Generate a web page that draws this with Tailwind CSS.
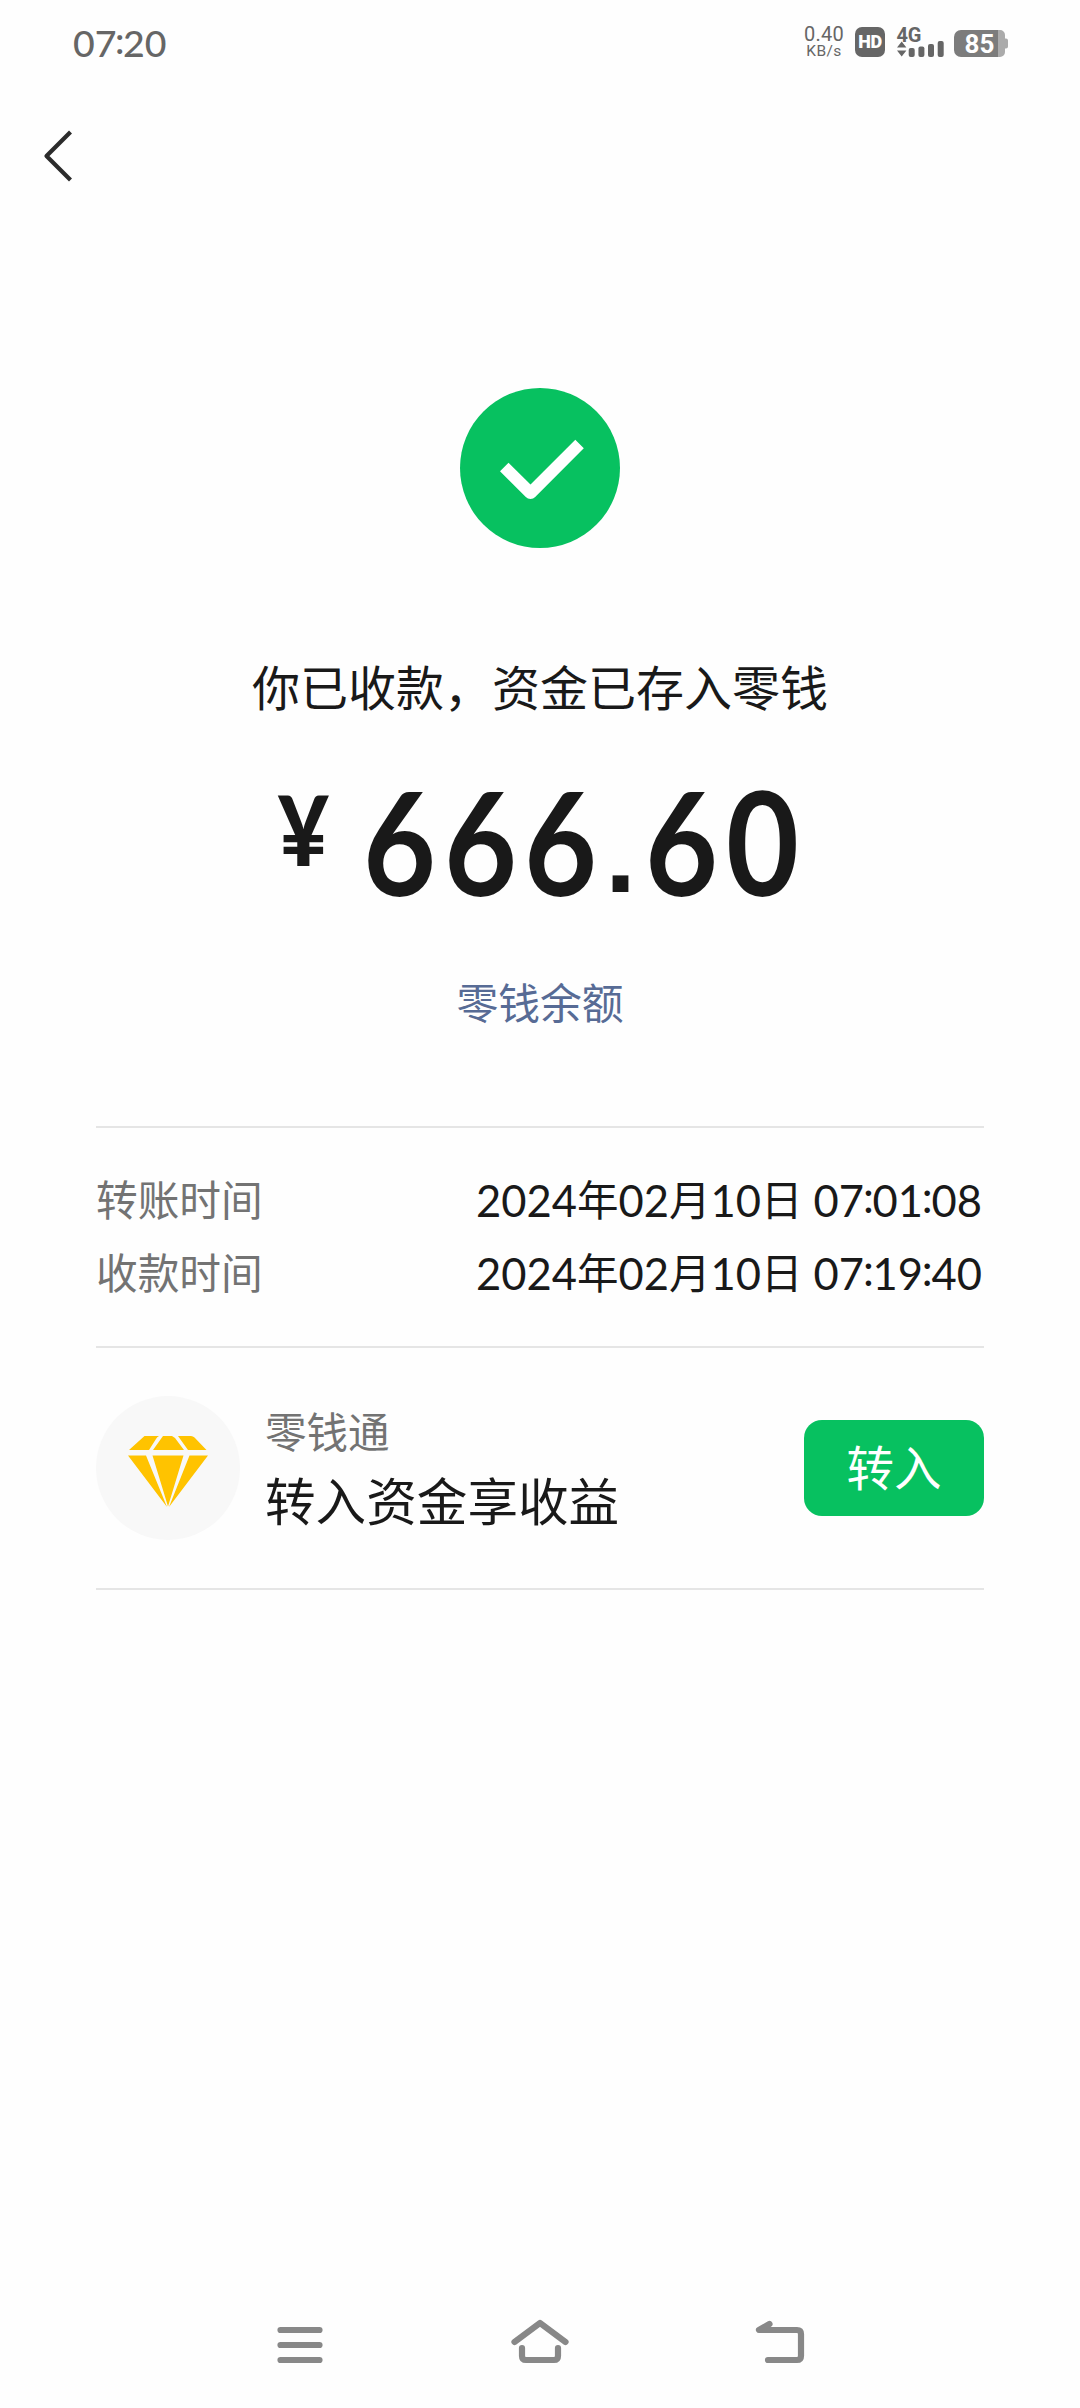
<!DOCTYPE html>
<html lang="zh-CN">
<head>
<meta charset="utf-8">
<title>收款详情</title>
<script src="https://cdn.jsdelivr.net/npm/@tailwindcss/browser@4"></script>
</head>
<body class="bg-[#fefefe]">
<div class="flex h-[2408px] w-[1080px] flex-col overflow-hidden bg-[#fefefe] font-['Lato','Noto_Sans_CJK_SC',sans-serif] text-[#191919]">

  <!-- status bar -->
  <header class="flex h-[88px] shrink-0 items-center justify-between pl-[73px] pr-[72px] text-[#666]">
    <div class="flex text-[37.5px] leading-[85px] -mt-[3px] font-medium"><span>07</span><span class="-mx-[1.5px] -mt-[3px]">:</span><span>20</span></div>
    <div class="flex h-[88px] items-start pt-[26px]">
      <div class="flex w-[40px] flex-col items-center font-['Roboto',sans-serif]">
        <span class="text-[20px] leading-[17px] tracking-[0.2px]">0.40</span>
        <span class="text-[15.5px] leading-[17px] tracking-[0.4px]">KB/s</span>
      </div>
      <div class="ml-[11px] mt-px flex h-[30px] w-[30px] items-center justify-center rounded-[7px] bg-[#666] font-['Roboto',sans-serif] text-[18px] font-black leading-none tracking-[-0.5px] text-white">HD</div>
      <svg class="ml-[11px] overflow-visible" width="49" height="32" viewBox="896 26 49 32" fill="#666">
        <text x="896.500" y="41.500" font-family="Roboto" font-weight="700" font-size="20" textLength="25">4G</text>
        <path d="M897 47.500l4.700-6 4.700 6zM897 50.500l4.700 6 4.700-6z"/>
        <rect x="908.700" y="48" width="6" height="9" rx="2"/>
        <rect x="918.400" y="46.500" width="6" height="10.500" rx="2"/>
        <rect x="928" y="44" width="6" height="13" rx="2"/>
        <rect x="937.700" y="41" width="6" height="16" rx="2"/>
      </svg>
      <svg class="ml-[9px]" width="54" height="32" viewBox="954 26 54 32">
        <path d="M997 30h3a5 5 0 0 1 5 5v3.500h1a2 2 0 0 1 2 2v6a2 2 0 0 1-2 2h-1V52a5 5 0 0 1-5 5h-3z" fill="#ababab"/>
        <path d="M961 30h37v27h-37a7 7 0 0 1-7-7V37a7 7 0 0 1 7-7z" fill="#7c7c7c"/>
        <text x="964.500" y="52.700" font-family="Roboto" font-weight="700" font-size="26" textLength="30" fill="#fff">85</text>
      </svg>
    </div>
  </header>

  <!-- navigation -->
  <nav class="flex h-[136px] shrink-0 pl-[40px] pt-[40px]">
    <svg width="36" height="56" viewBox="40 128 36 56" fill="none" stroke="#2b2b2b" stroke-width="4.200" stroke-linejoin="round"><path d="M70.500 132L46.500 156l24 24"/></svg>
  </nav>

  <!-- result -->
  <main class="flex flex-1 flex-col px-[96px] pt-[164px]">
    <section class="flex flex-col items-center">
      <svg width="160" height="160" viewBox="460 388 160 160">
        <circle cx="540" cy="468" r="80" fill="#07c160"/>
        <path d="M500 471.300l8.500-8.500 22 21.700 44.800-44.700 8.500 8.500-48.600 48.700a6.500 6.500 0 0 1-9.400 0z" fill="#fff"/>
      </svg>
      <h1 class="mt-[104px] whitespace-nowrap text-[48px] font-normal leading-[72px]">你已收款，资金已存入零钱</h1>
      <div class="mt-[49px] flex h-[140px] items-start pr-[1px] text-[143px] font-bold leading-[136px]">
        <span class="mr-[28px] mt-[15px] flex w-[54px] justify-center text-[98px] font-black leading-[80px]"><span class="scale-x-[.9]">¥</span></span>
        <span class="flex w-[81px] justify-center"><span class="scale-x-[.88]">6</span></span>
        <span class="flex w-[81px] justify-center"><span class="scale-x-[.88]">6</span></span>
        <span class="flex w-[80px] justify-center"><span class="scale-x-[.88]">6</span></span>
        <span class="mt-[13px] flex w-[40px] justify-center font-['Liberation_Sans',sans-serif] text-[112px]">.</span>
        <span class="flex w-[81px] justify-center"><span class="scale-x-[.88]">6</span></span>
        <span class="flex w-[81px] justify-center"><span class="scale-x-[.88]">0</span></span>
      </div>
      <a class="mt-[60px] text-[41.8px] leading-[60px] text-[#576b95]">零钱余额</a>
    </section>

    <dl class="mt-[93px] flex h-[222px] shrink-0 flex-col border-y-2 border-[#e5e5e5] pt-[36px] leading-[73px]">
      <div class="flex justify-between">
        <dt class="text-[41.7px] text-[#737373]">转账时间</dt>
        <dd class="mr-[2px] flex whitespace-pre text-[43.5px]"><span>2024</span><span class="text-[41.5px]">年</span><span>02</span><span class="text-[41.5px]">月</span><span>10</span><span class="text-[41.5px]">日</span><span> 07</span><span class="-mx-[1.2px] -mt-1">:</span><span>01</span><span class="-mx-[1.2px] -mt-1">:</span><span>08</span></dd>
      </div>
      <div class="flex justify-between">
        <dt class="text-[41.7px] text-[#737373]">收款时间</dt>
        <dd class="mr-[2px] flex whitespace-pre text-[43.5px]"><span>2024</span><span class="text-[41.5px]">年</span><span>02</span><span class="text-[41.5px]">月</span><span>10</span><span class="text-[41.5px]">日</span><span> 07</span><span class="-mx-[1.2px] -mt-1">:</span><span>19</span><span class="-mx-[1.2px] -mt-1">:</span><span>40</span></dd>
      </div>
    </dl>

    <section class="flex h-[242px] shrink-0 items-center border-b-2 border-[#e5e5e5]">
      <div class="flex h-[144px] w-[144px] items-center justify-center rounded-full bg-[#f8f8f8]">
        <svg width="80" height="72" viewBox="0 0 80 72" fill="#ffc300" class="mt-[8px]">
          <path d="M16.500 0H31q-2 1-3 3l-7 11H1zM35 0h9l3 2 9 12H25zM50 0h13q2 0 3.500 1.500L78.500 14H60zM0 19.500h18l21 51.500zM24.500 19.500h31L40 70.500zM61.500 19.500H80L41 71z"/>
        </svg>
      </div>
      <div class="ml-[25px] mt-[4px] flex flex-1 flex-col">
        <span class="text-[41.5px] leading-[62px] text-[#737373]">零钱通</span>
        <span class="mt-px whitespace-nowrap text-[50.6px] leading-[76px]">转入资金享收益</span>
      </div>
      <button class="flex h-[96px] w-[180px] items-center justify-center rounded-[18px] bg-[#07c160] text-[47.5px] leading-[96px] text-white">转入</button>
    </section>
  </main>

  <!-- system keys -->
  <footer class="flex h-[128px] shrink-0 items-center justify-center">
    <svg width="580" height="128" viewBox="250 2280 580 128" fill="none" stroke="#888" stroke-width="6.200" stroke-linecap="round" stroke-linejoin="round">
      <path d="M280.500 2330h39M280.500 2345h39M280.500 2360h39"/>
      <path d="M514.500 2342l25.500-19 25.500 19M522 2348v8q0 4 4 4h28q4 0 4-4v-8"/>
      <path d="M769.500 2324l-10.500 6h38q4 0 4 4v22q0 4-4 4h-29"/>
    </svg>
  </footer>
</div>
</body>
</html>
